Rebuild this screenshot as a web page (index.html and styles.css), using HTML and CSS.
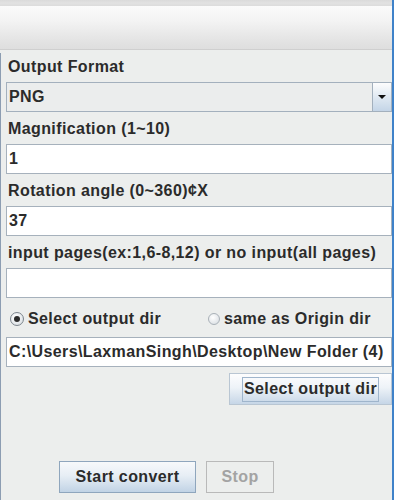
FILE: index.html
```html
<!DOCTYPE html>
<html lang="en">
<head>
    <meta charset="UTF-8">
    <meta name="viewport" content="width=device-width, initial-scale=1.0">
    <title>PDF to Image</title>
    <link rel="stylesheet" href="styles.css">
</head>
<body>
    <div class="window">
        <div class="title-strip"></div>
        <div class="toolbar"></div>

        <form class="panel" id="convert-form">
            <label class="field-label">Output Format</label>
            <div class="combo">
                <span class="combo-value">PNG</span>
                <span class="combo-arrow"></span>
            </div>

            <label class="field-label" for="magnification">Magnification (1~10)</label>
            <input class="text-field" type="text" id="magnification" value="1">

            <label class="field-label" for="rotation">Rotation angle (0~360)¢X</label>
            <input class="text-field" type="text" id="rotation" value="37">

            <label class="field-label" for="pages">input pages(ex:1,6-8,12) or no input(all pages)</label>
            <input class="text-field" type="text" id="pages" value="">

            <div class="radio-row">
                <label class="radio"><span class="radio-dot checked"></span>Select output dir</label>
                <label class="radio"><span class="radio-dot small"></span>same as Origin dir</label>
            </div>

            <input class="text-field path-field" type="text" value="C:\Users\LaxmanSingh\Desktop\New Folder (4)">

            <div class="dir-row">
                <button type="button" class="btn btn-dir"><span class="focus">Select output dir</span></button>
            </div>

            <div class="actions">
                <button type="submit" class="btn btn-start">Start convert</button>
                <button type="button" class="btn btn-stop" disabled>Stop</button>
            </div>
        </form>
    </div>
</body>
</html>
```

FILE: styles.css
```css
body { margin: 0; font-family: "Liberation Sans", Arial, sans-serif; background-color: #eceeed; overflow: hidden; }
.window { width: 394px; height: 500px; box-sizing: border-box; border-right: 2px solid #3f82c9; display: flex; flex-direction: column; background-color: #eceeed; }
.title-strip { height: 6px; background: linear-gradient(#dadada, #e2e2e2 50%, #dcdcdc); }
.toolbar { height: 43px; background: linear-gradient(#fbfbfb, #f3f3f3 35%, #e2e2e2 85%, #dedede); border-bottom: 1px solid #cfcfcf; }

.panel { flex: 1; margin-top: 3px; border-left: 1px solid #8c9db2; padding: 5px 0 0 5px; display: flex; flex-direction: column; }
.field-label, .radio, .text-field, .combo-value, .btn { font-size: 16px; font-weight: bold; letter-spacing: 0.4px; color: #2b2b2b; }
.field-label { display: block; line-height: 18px; padding-left: 2px; margin-bottom: 6px; white-space: nowrap; }

.combo { height: 30px; box-sizing: border-box; border: 1px solid #a3b0bd; background-color: #ebeded; display: flex; align-items: center; margin-bottom: 8px; }
.combo-value { flex: 1; padding-left: 2px; line-height: 28px; }
.combo-arrow { width: 18px; height: 28px; border-left: 1px solid #a3b0bd; background: linear-gradient(#fdfdfd, #dde7f1 55%, #c4d5e7); position: relative; }
.combo-arrow::after { content: ""; position: absolute; left: 5px; top: 12px; border-left: 4px solid transparent; border-right: 4px solid transparent; border-top: 4px solid #111; }

.text-field { height: 30px; box-sizing: border-box; border: 1px solid #a6b1bc; background-color: white; padding: 0 2px; margin: 0 0 8px 0; font-family: inherit; outline: none; }
#pages { margin-bottom: 12px; }
.path-field { margin-bottom: 6px; white-space: nowrap; }

.radio-row { display: grid; grid-template-columns: 198px auto; padding-left: 4px; height: 18px; margin-bottom: 9px; }
.radio { display: flex; align-items: center; gap: 4px; line-height: 18px; white-space: nowrap; }
.radio-dot { width: 11px; height: 11px; border-radius: 50%; border: 1px solid #8d959c; background: radial-gradient(circle at 40% 35%, #ffffff, #d4dadf); box-sizing: content-box; position: relative; }
.radio-dot.checked { width: 12px; height: 12px; border-color: #7c858d; }
.radio-dot.checked::after { content: ""; position: absolute; left: 3px; top: 3px; width: 6px; height: 6px; border-radius: 50%; background-color: #2b2b2b; }
.radio-dot.small { width: 10px; height: 10px; border-color: #a9b1b8; }

.dir-row { display: flex; justify-content: flex-end; }
.btn { font-family: inherit; cursor: pointer; padding: 0; }
.btn-dir { width: 163px; height: 32px; border: 1px solid #b9c6d3; background: linear-gradient(#fdfdfe, #eef3f8 45%, #c6d6e7); display: flex; align-items: center; justify-content: center; }
.btn-dir .focus { border: 1px solid #9fb5cc; padding: 2px 1px 3px; line-height: 18px; }

.actions { display: flex; gap: 10px; margin-top: 56px; padding-left: 53px; }
.btn-start { width: 137px; height: 32px; border: 1px solid #8fa6bd; background: linear-gradient(#f7f9fb, #e7eef5 45%, #c1d3e5); }
.btn-stop { width: 68px; height: 32px; border: 1px solid #b9b9b9; background-color: #eceeed; color: #a3a3a3; cursor: default; }
```
